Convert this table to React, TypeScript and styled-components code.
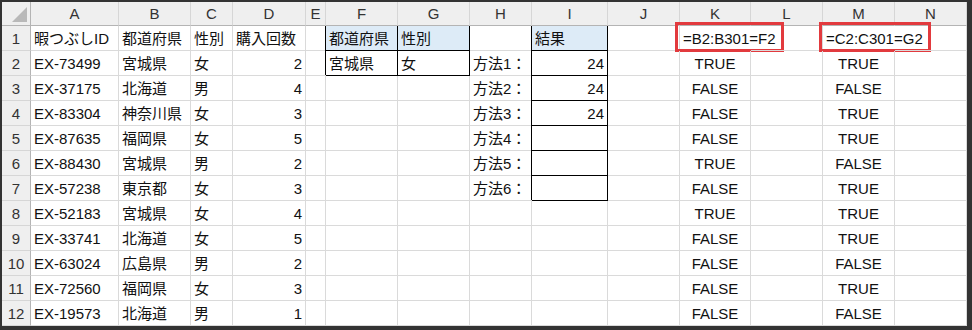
import React from "react";
import styled, { createGlobalStyle, css } from "styled-components";

type Align = "left" | "right" | "center";

interface CellData {
  v?: string;
  a?: Align;
  box?: boolean;
  head?: boolean;
  spill?: boolean;
  mark?: { left: number; width: number };
}

const COLS = [88, 72, 42, 73, 20, 72, 72, 62, 76, 72, 71, 72, 72, 72];
const LETTERS = "ABCDEFGHIJKLMN".split("");

const customers = [
  ["EX-73499", "宮城県", "女", "2"],
  ["EX-37175", "北海道", "男", "4"],
  ["EX-83304", "神奈川県", "女", "3"],
  ["EX-87635", "福岡県", "女", "5"],
  ["EX-88430", "宮城県", "男", "2"],
  ["EX-57238", "東京都", "女", "3"],
  ["EX-52183", "宮城県", "女", "4"],
  ["EX-33741", "北海道", "女", "5"],
  ["EX-63024", "広島県", "男", "2"],
  ["EX-72560", "福岡県", "女", "3"],
  ["EX-19573", "北海道", "男", "1"],
];

const prefMatch = [1, 0, 0, 0, 1, 0, 1, 0, 0, 0, 0];
const sexMatch = [1, 0, 1, 1, 0, 1, 1, 1, 0, 1, 0];
const results = ["24", "24", "24", "", "", ""];

const bool = (b: number): CellData => ({ v: b ? "TRUE" : "FALSE", a: "center" });

const buildRows = (): CellData[][] => {
  const first: CellData[] = [
    { v: "暇つぶしID" },
    { v: "都道府県" },
    { v: "性別" },
    { v: "購入回数" },
    {},
    { v: "都道府県", box: true, head: true },
    { v: "性別", box: true, head: true },
    {},
    { v: "結果", box: true, head: true },
    {},
    { v: "=B2:B301=F2", spill: true, mark: { left: -5, width: 109 } },
    {},
    { v: "=C2:C301=G2", spill: true, mark: { left: -4, width: 112 } },
    {},
  ];
  const rest = customers.map((c, i): CellData[] => [
    { v: c[0] },
    { v: c[1] },
    { v: c[2] },
    { v: c[3], a: "right" },
    {},
    i === 0 ? { v: "宮城県", box: true } : {},
    i === 0 ? { v: "女", box: true } : {},
    i < 6 ? { v: `方法${i + 1}：` } : {},
    i < 6 ? { v: results[i], a: "right", box: true } : {},
    {},
    bool(prefMatch[i]),
    {},
    bool(sexMatch[i]),
    {},
  ]);
  return [first, ...rest];
};

const GlobalStyle = createGlobalStyle`
  body {
    margin: 0;
    background: #ffffff;
    font-family: "Liberation Sans", "Noto Sans CJK JP", sans-serif;
  }
`;

const Frame = styled.div`
  width: 972px;
  height: 330px;
  box-sizing: border-box;
  border-style: solid;
  border-color: #333333;
  border-width: 2px 5px 4px 2px;
  background: #ffffff;
  overflow: hidden;
`;

const Sheet = styled.div`
  display: grid;
  grid-template-columns: 29px ${COLS.map((w) => `${w}px`).join(" ")};
  grid-template-rows: 24px repeat(12, 25px);
  font-size: 15px;
`;

const Corner = styled.div`
  display: flex;
  align-items: flex-end;
  justify-content: flex-end;
  padding: 0 3px 3px 0;
  box-sizing: border-box;
  background: #efefef;
  border-right: 1px solid #b4b4b4;
  border-bottom: 1px solid #b4b4b4;
`;

const ColHead = styled.div`
  box-sizing: border-box;
  background: #efefef;
  color: #333333;
  text-align: center;
  line-height: 23px;
  border-right: 1px solid #d6d6d6;
  border-bottom: 1px solid #b4b4b4;
`;

const RowHead = styled.div`
  box-sizing: border-box;
  background: #efefef;
  color: #333333;
  text-align: center;
  line-height: 24px;
  padding-top: 1px;
  border-right: 1px solid #b4b4b4;
  border-bottom: 1px solid #d6d6d6;
`;

const Cell = styled.div<{ $align: Align; $box?: boolean; $head?: boolean; $spill?: boolean; $top?: boolean }>`
  position: relative;
  box-sizing: border-box;
  padding: 1px 3px 0;
  line-height: 24px;
  white-space: nowrap;
  color: #111111;
  text-align: ${({ $align }) => $align};
  overflow: ${({ $spill }) => ($spill ? "visible" : "hidden")};
  background: ${({ $head }) => ($head ? "#ddebf7" : "transparent")};
  border-right: 1px solid ${({ $spill }) => ($spill ? "transparent" : "#dadada")};
  border-bottom: 1px solid #dadada;
  ${({ $box, $top }) =>
    $box &&
    css`
      border-right-color: #000000;
      border-bottom-color: #000000;
      box-shadow: ${$top ? "-1px 0 0 #000000" : "-1px -1px 0 #000000"};
    `}
`;

const Mark = styled.span<{ $left: number; $width: number }>`
  position: absolute;
  top: -4px;
  left: ${({ $left }) => $left}px;
  width: ${({ $width }) => $width}px;
  height: 30px;
  box-sizing: border-box;
  border: 3px solid #e23a3e;
  pointer-events: none;
`;

const App = () => {
  const rows = buildRows();
  return (
    <>
      <GlobalStyle />
      <Frame>
        <Sheet>
          <Corner>
            <svg width="15" height="15" viewBox="0 0 15 15">
              <polygon points="15,0 15,15 0,15" fill="#b9b9b9" />
            </svg>
          </Corner>
          {LETTERS.map((l) => (
            <ColHead key={l}>{l}</ColHead>
          ))}
          {rows.map((row, r) => (
            <React.Fragment key={r}>
              <RowHead>{r + 1}</RowHead>
              {row.map((c, i) => (
                <Cell
                  key={i}
                  $align={c.a ?? "left"}
                  $box={c.box}
                  $head={c.head}
                  $spill={c.spill}
                  $top={r === 0}
                >
                  {c.v}
                  {c.mark && <Mark $left={c.mark.left} $width={c.mark.width} />}
                </Cell>
              ))}
            </React.Fragment>
          ))}
        </Sheet>
      </Frame>
    </>
  );
};

export default App;
